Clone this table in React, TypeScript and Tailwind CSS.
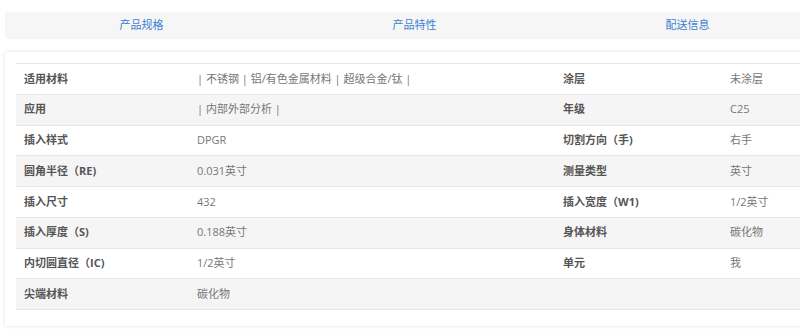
const tabs = ["产品规格", "产品特性", "配送信息"];

const rows: [string, string, string, string][] = [
  ["适用材料", "| 不锈钢 | 铝/有色金属材料 | 超级合金/钛 |", "涂层", "未涂层"],
  ["应用", "| 内部外部分析 |", "年级", "C25"],
  ["插入样式", "DPGR", "切割方向（手)", "右手"],
  ["圆角半径（RE)", "0.031英寸", "测量类型", "英寸"],
  ["插入尺寸", "432", "插入宽度（W1)", "1/2英寸"],
  ["插入厚度（S)", "0.188英寸", "身体材料", "碳化物"],
  ["内切圆直径（IC)", "1/2英寸", "单元", "我"],
  ["尖端材料", "碳化物", "", ""],
];

export default function App() {
  return (
    <div
      className="w-[800px] h-[329px] overflow-hidden bg-white text-[11px]"
      style={{ fontFamily: '"Open Sans", "Noto Sans CJK SC", sans-serif' }}
    >
      <div className="w-[830px] pl-[5px] pt-[12px]">
        {/* TABS */}
        <div className="flex h-[27px] bg-[#f6f6f6]">
          {tabs.map((t) => (
            <div
              key={t}
              className="w-[273px] flex items-center justify-center text-[#3b7fd4]"
            >
              {t}
            </div>
          ))}
        </div>

        {/* CARD */}
        <div className="mt-[13px] bg-white shadow-[0_0_4px_rgba(0,0,0,0.12)] pl-[11px] pt-[11px] pb-[16px]">
          <div className="border-t border-[#e6e6e6]">
            {rows.map((r, i) => (
              <div
                key={i}
                className={`flex h-[30.75px] items-center border-b border-[#e6e6e6] ${
                  i % 2 === 1 ? "bg-[#f5f5f5]" : "bg-white"
                }`}
              >
                <div className="w-[181px] pl-[8px] font-bold text-[#555]">
                  {r[0]}
                </div>
                <div className="w-[366px] text-[#777]">{r[1]}</div>
                <div className="w-[167px] font-bold text-[#555]">{r[2]}</div>
                <div className="flex-1 text-[#777]">{r[3]}</div>
              </div>
            ))}
          </div>
        </div>
      </div>
    </div>
  );
}
